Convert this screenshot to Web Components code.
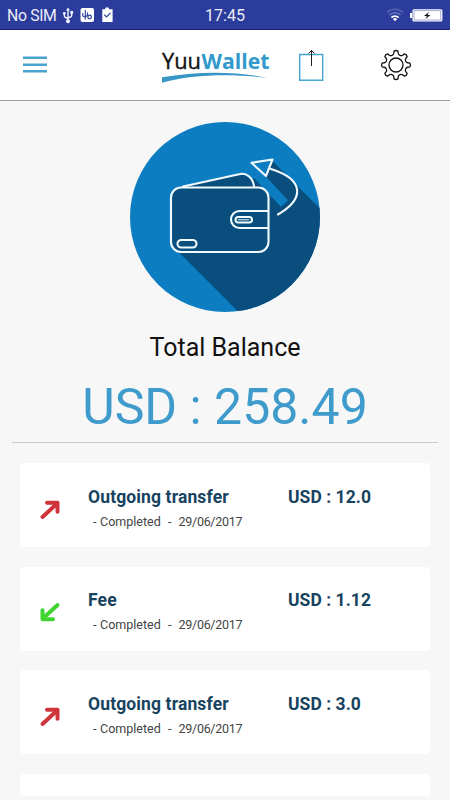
<!DOCTYPE html>
<html lang="en">
<head>
<meta charset="utf-8">
<title>YuuWallet</title>
<style>
html,body{margin:0;height:100%;overflow:hidden;background:#f7f7f7;font-family:Roboto,sans-serif}
</style>
</head>
<body>
<wallet-app></wallet-app>
<script>
function define(name, html, setup) {
  const t = document.createElement('template');
  t.innerHTML = html;
  customElements.define(name, class extends HTMLElement {
    constructor() {
      super();
      this.attachShadow({mode: 'open'}).append(t.content.cloneNode(true));
    }
    connectedCallback() { if (setup) setup(this, this.shadowRoot); }
  });
}

define('status-bar', `
<style>
:host{display:grid;grid-template-columns:1fr auto 1fr;height:30px;box-sizing:border-box;background:#2c3c9c;border-bottom:1px solid #14207c;color:#e9ecf8;font-size:16px;line-height:31px;white-space:nowrap}
.left{display:flex;padding-left:7px}
.left span{width:53px;font-size:15.8px;letter-spacing:-.35px}
.right{display:flex;justify-content:flex-end;padding-right:6px}
svg{display:block}
</style>
<div class="left"><span>No SIM</span>
<svg width="56" height="29" viewBox="60 0 56 29" fill="none" stroke="#eef1fb">
<path d="M68 9v12M64.3 13.5v2.2q0 1.3 1.3 1.8l2.4 1M71.7 12.5v3q0 1-1.3 1.5l-2.4 1" stroke-width="1.4"/>
<path d="M66 10.5 68 7.5l2 3z" fill="#eef1fb" stroke="none"/><circle cx="68" cy="21.3" r="2" fill="#eef1fb" stroke="none"/><circle cx="64.3" cy="13.3" r="1.4" fill="#eef1fb" stroke="none"/><path d="M70.3 11h2.8v2.8h-2.8z" fill="#eef1fb" stroke="none"/>
<rect x="80.5" y="8" width="13.5" height="14" rx="2" fill="#fff" stroke="none"/>
<path d="M85.3 10v9.5M82.8 13v3l2.5 1.3M87.5 12.5v3l-2.2 1.3" stroke="#2c3c9c" stroke-width="1.1"/><circle cx="89.6" cy="17" r="1.8" stroke="#2c3c9c" stroke-width="1.2"/>
<path d="M102.3 9.3h2.8a2 2 0 0 1 4 0h3.500V22h-10.300z" fill="#fff" stroke="none"/><path d="m104.300 14.700 2.200 2.200 4-4" stroke="#2c3c9c" stroke-width="1.200"/>
</svg></div>
<div>17:45</div>
<div class="right"><svg width="58" height="29" viewBox="386 0 58 29">
<path d="M387.2 12.3a11.5 11.5 0 0 1 15.6 0" fill="none" stroke="#5361b1" stroke-width="1.7"/>
<path d="M389.4 15a8 8 0 0 1 11.2 0" fill="none" stroke="#6875bd" stroke-width="1.6"/>
<path d="M391.4 17.7a5 5 0 0 1 7.2 0" fill="none" stroke="#fff" stroke-width="1.7"/>
<path d="m395 21.3-2-2.3a2.8 2.8 0 0 1 4 0z" fill="#fff"/>
<rect x="410" y="13" width="2" height="5" fill="#fff"/><rect x="412.4" y="9.2" width="30" height="12.3" rx="1.5" fill="#fff"/><rect x="414" y="10.7" width="26.8" height="9.3" fill="none" stroke="#7c88c9" stroke-width=".7"/>
<path d="m429 12-5 4h3l-1.5 3 5-4h-3z" fill="#111"/>
</svg></div>`);

define('gear-icon', `
<style>:host{display:block;width:32px;height:32px}svg{display:block}</style>
<svg width="32" height="32" viewBox="-16 -16 32 32" fill="none" stroke="#111" stroke-width="1.3" stroke-linejoin="round"><path/><circle r="7"/></svg>`,
(el, root) => {
  const p = (r, deg) => { const a = deg * Math.PI / 180; return (r * Math.sin(a)).toFixed(2) + ' ' + (-r * Math.cos(a)).toFixed(2); };
  let d = 'M' + p(14, -8);
  for (let i = 0; i < 8; i++) {
    const a = i * 45;
    d += 'Q' + p(15.2, a) + ' ' + p(14, a + 8) + 'L' + p(11.8, a + 11) + 'C' + p(10.1, a + 15) + ' ' + p(10.1, a + 30) + ' ' + p(11.8, a + 34) + 'L' + p(14, a + 37);
  }
  root.querySelector('path').setAttribute('d', d + 'Z');
});

define('app-header', `
<style>
:host{display:grid;grid-template-columns:24px 1fr 26px 32px;height:71px;box-sizing:border-box;padding:0 38.5px 0 23px;background:#fff;border-bottom:1px solid #999;align-items:center}
svg{display:block}
.brand{justify-self:start;margin-left:114px}
.share{margin-left:-56px}
</style>
<svg width="24" height="18" viewBox="0 0 24 18" fill="#4ba3cf"><path d="M0 .5h24v2.4H0zM0 7.5h24v2.4H0zM0 14h24v2.4H0z"/></svg>
<svg class="brand" width="112" height="40" viewBox="161 46 112 40" font-family="Open Sans, sans-serif" font-size="21">
<text x="162" y="69.8" textLength="39" lengthAdjust="spacingAndGlyphs" fill="#111" stroke="#111" stroke-width=".35">Yuu</text><text x="201.5" y="69.8" textLength="68" lengthAdjust="spacingAndGlyphs" font-weight="700" fill="#3199cc">Wallet</text>
<path d="M162 78.3C195 72.5 234 71.5 267 79 235 74.500 191 75 162 83.800z" fill="#3796c6"/></svg>
<svg class="share" width="26" height="34" viewBox="298 48 26 34" fill="none"><path d="M299.7 54.500h23v25.700h-23z" stroke="#45a5d2" stroke-width="1.400"/><path d="M311.500 66V50.500m-3 3 3-3 3 3" stroke="#222"/></svg>
<gear-icon></gear-icon>`);

define('wallet-badge', `
<style>:host{display:block;width:190px;height:190px}svg{display:block}</style>
<svg width="190" height="190" viewBox="130 121.5 190 190">
<defs><clipPath id="c"><circle cx="225" cy="216.5" r="95"/></clipPath></defs>
<circle cx="225" cy="216.5" r="95" fill="#0d7dc2"/>
<path clip-path="url(#c)" d="M174 247l74 74h90v-95l-66-66-6 16 22 24-7 6.500-27-29z" fill="#0a4e7d"/>
<path d="M181 186.800 241 173.800q12 2 13.500 14z" fill="#0a4e7d"/>
<rect x="171" y="187" width="97.500" height="65" rx="10" fill="#0a4e7d"/>
<g fill="none" stroke="#f1faff" stroke-width="2.100" stroke-linejoin="round" stroke-linecap="round">
<rect x="171" y="187" width="97.500" height="64.500" rx="10"/>
<path d="m183 186 56-12.300c8-2 14 4 15 12"/>
<path d="M268 210.500h-28.500a8.500 8.500 0 0 0 0 17h28.500"/>
<rect x="235.500" y="216.500" width="16.500" height="5.500" rx="2.750"/><path d="M238.500 219.300h10" stroke-width="1"/>
<rect x="177.500" y="239.500" width="19" height="7.500" rx="3.750"/>
<path d="m251.500 162.300 21-3.300-6.500 16.500zM271 168.500c32 10 35 29 7 45.500"/>
</g></svg>`);

define('balance-panel', `
<style>
:host{display:flex;flex-direction:column;align-items:center;margin:0 12px;padding-top:20.500px;height:342px;box-sizing:border-box;border-bottom:1.500px solid #cacaca;white-space:nowrap}
.label{margin-top:21px;font-size:25px;line-height:30px;color:#111}
.total{margin-top:14.500px;font-size:50px;line-height:60px;color:#3e9bcb}
</style>
<wallet-badge></wallet-badge>
<div class="label"><slot name="label"></slot></div>
<div class="total"><slot name="amount"></slot></div>`);

define('transaction-row', `
<style>
:host{display:grid;grid-template-columns:68px 200px 1fr;height:84px;margin-bottom:19.500px;background:#fff;border-radius:4px;box-sizing:border-box;padding-top:22.500px;white-space:nowrap;flex:none}
:host([blank]){height:22px;margin:0}
:host([blank]) > *{display:none}
svg{margin:12.500px 0 0 19px;color:#cf343a}
:host([incoming]) svg{transform:rotate(180deg);color:#40d431}
.title,.amount{font-size:17.500px;line-height:22px;font-weight:700;color:#17435f;letter-spacing:.13px}
.amount{letter-spacing:.05px}
.sub{margin:5px 0 0 5px;font-size:12.500px;line-height:18px;color:#444;white-space:pre;word-spacing:.5px}
::slotted([slot=date]){letter-spacing:-.3px}
</style>
<svg width="22" height="22" viewBox="0 0 22 22" fill="none" stroke="currentColor" stroke-linejoin="round" stroke-linecap="round"><path d="M3.500 19 17 6.500" stroke-width="4"/><path d="M8 4.700h10.500v9" stroke-width="4"/><path d="m13 5 5 5V5z" fill="currentColor"/></svg>
<div><div class="title"><slot name="title"></slot></div><div class="sub"><slot name="detail"></slot><slot name="date"></slot></div></div>
<div class="amount"><slot name="amount"></slot></div>`);

define('wallet-app', `
<style>
:host{display:flex;flex-direction:column;width:450px;height:800px;overflow:hidden}
main{display:flex;flex-direction:column;padding:20px 20px 0}
</style>
<status-bar></status-bar>
<app-header></app-header>
<balance-panel><span slot="label">Total Balance</span><span slot="amount">USD : 258.49</span></balance-panel>
<main>
<transaction-row><span slot="title">Outgoing transfer</span><span slot="detail">- Completed  -  </span><span slot="date">29/06/2017</span><span slot="amount">USD : 12.0</span></transaction-row>
<transaction-row incoming><span slot="title">Fee</span><span slot="detail">- Completed  -  </span><span slot="date">29/06/2017</span><span slot="amount">USD : 1.12</span></transaction-row>
<transaction-row><span slot="title">Outgoing transfer</span><span slot="detail">- Completed  -  </span><span slot="date">29/06/2017</span><span slot="amount">USD : 3.0</span></transaction-row>
<transaction-row blank></transaction-row>
</main>`);
</script>
</body>
</html>
